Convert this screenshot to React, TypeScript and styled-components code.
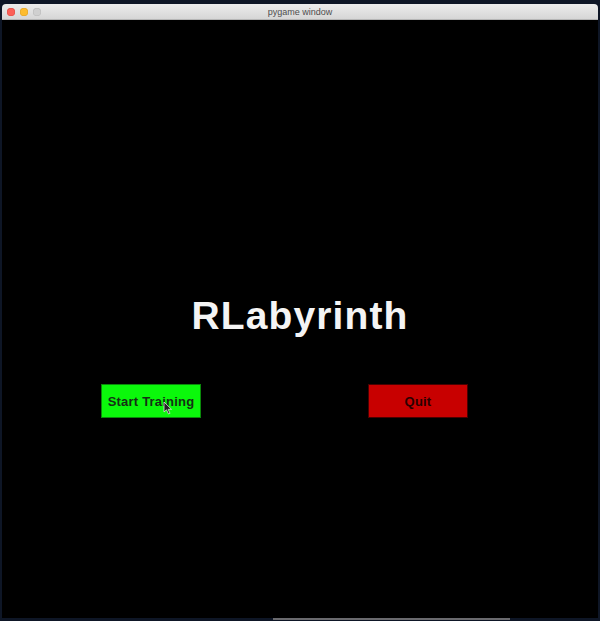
import React from "react";
import styled, { createGlobalStyle } from "styled-components";

const Global = createGlobalStyle`
  html, body { margin: 0; padding: 0; background: #0e1626; }
  body { width: 600px; height: 621px; overflow: hidden; font-family: "Liberation Sans", Arial, sans-serif; }
`;

const Screen = styled.div`
  width: 600px;
  height: 621px;
  display: flex;
  flex-direction: column;
  align-items: center;
  padding-top: 4px;
  box-sizing: border-box;
`;

const Window = styled.div`
  width: 596px;
  display: flex;
  flex-direction: column;
`;

const TitleBar = styled.div`
  height: 15px;
  background: linear-gradient(#ececec, #d6d6d6);
  border-bottom: 1px solid #b5b5b5;
  border-radius: 4px 4px 0 0;
  display: grid;
  grid-template-columns: 60px 1fr 60px;
  align-items: center;
`;

const Lights = styled.div`
  display: flex;
  gap: 5px;
  padding-left: 5px;
`;

const Light = styled.span<{ $c: string; $b: string }>`
  width: 8px;
  height: 8px;
  border-radius: 50%;
  background: ${(p) => p.$c};
  box-shadow: inset 0 0 0 0.5px ${(p) => p.$b};
`;

const TitleText = styled.div`
  text-align: center;
  font-size: 9px;
  color: #4d4d4d;
  font-family: "Liberation Sans", Arial, sans-serif;
`;

const Content = styled.div`
  position: relative;
  height: 598px;
  background: #000;
  display: flex;
  flex-direction: column;
  align-items: center;
`;

const Heading = styled.h1`
  margin: 273px 0 0 0;
  font-family: "Liberation Sans", Arial, sans-serif;
  font-weight: bold;
  font-size: 39px;
  line-height: 46px;
  color: #f4f4f4;
  letter-spacing: 1.1px;
`;

const ButtonRow = styled.div`
  margin-top: 45px;
  width: 100%;
  display: flex;
  justify-content: space-between;
  padding: 0 130px 0 99px;
  box-sizing: border-box;
`;

const Button = styled.div<{ $bg: string; $border: string; $fg: string }>`
  width: 100px;
  height: 34px;
  box-sizing: border-box;
  background: ${(p) => p.$bg};
  border: 1px solid ${(p) => p.$border};
  color: ${(p) => p.$fg};
  display: flex;
  align-items: center;
  justify-content: center;
  font-family: "Liberation Sans", Arial, sans-serif;
  font-weight: bold;
  font-size: 13px;
  letter-spacing: 0.2px;
`;

const Cursor = styled.svg`
  position: absolute;
  left: 161px;
  top: 381px;
`;

const Bottom = styled.div`
  height: 3px;
  width: 600px;
  display: flex;
  padding-left: 273px;
  box-sizing: border-box;
  align-items: flex-start;
`;

const HomeLine = styled.div`
  width: 237px;
  height: 2px;
  background: #6a6a6e;
`;

export default function App() {
  return (
    <>
      <Global />
      <Screen>
        <Window>
          <TitleBar>
            <Lights>
              <Light $c="#fc5f57" $b="#de4a42" />
              <Light $c="#fdbc2e" $b="#de9f22" />
              <Light $c="#d0d0d0" $b="#b9b9b9" />
            </Lights>
            <TitleText>pygame window</TitleText>
            <span />
          </TitleBar>
          <Content>
            <Heading>RLabyrinth</Heading>
            <ButtonRow>
              <Button $bg="#0bf80b" $border="#0a8a0a" $fg="#153015">Start Training</Button>
              <Button $bg="#c80000" $border="#4a0000" $fg="#2a0000">Quit</Button>
            </ButtonRow>
            <Cursor width="10" height="14" viewBox="0 0 10 14">
              <path d="M1 1 L1 11 L3.5 8.8 L5.5 13 L7 12.3 L5.2 8.3 L8.5 8.3 Z" fill="#222" stroke="#ddd" strokeWidth="0.8" />
            </Cursor>
          </Content>
        </Window>
        <Bottom>
          <HomeLine />
        </Bottom>
      </Screen>
    </>
  );
}
